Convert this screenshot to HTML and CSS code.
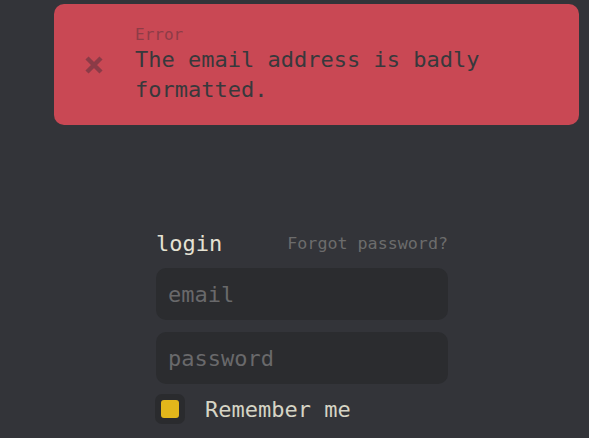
FILE: index.html
```html
<!DOCTYPE html>
<html lang="en">
<head>
    <meta charset="UTF-8">
    <title>Login</title>
    <link rel="stylesheet" href="styles.css">
</head>

<body>
    <div class="toast-bar">
        <div class="toast">
            <svg class="toast-icon" width="18" height="18" viewBox="0 0 18 18">
                <path d="M2 2 L16 16 M16 2 L2 16" stroke="#8b3b47" stroke-width="4.4" fill="none"/>
            </svg>
            <div class="toast-text">
                <div class="toast-title">Error</div>
                <div class="toast-msg">The email address is badly formatted.</div>
            </div>
        </div>
    </div>

    <form class="login-form" onsubmit="return false">
        <div class="form-head">
            <span class="form-title">login</span>
            <a href="#" class="forgot">Forgot password?</a>
        </div>
        <input type="text" class="field" placeholder="email">
        <input type="password" class="field" placeholder="password">
        <label class="remember">
            <span class="check"><span class="check-mark"></span></span>
            Remember me
        </label>
    </form>
</body>
</html>
```

FILE: styles.css
```css
body {
    font-family: 'DejaVu Sans Mono', 'Liberation Mono', monospace;
    background-color: #333439;
    margin: 0;
    padding: 0;
    color: #e5e2d3;
}
.toast-bar {
    display: flex;
    justify-content: flex-end;
    padding: 4px 10px 0 0;
}
.toast {
    width: 525px;
    height: 121px;
    box-sizing: border-box;
    background-color: #c94854;
    border-radius: 10px;
    display: flex;
    align-items: center;
    padding-left: 31px;
}
.toast-icon {
    display: block;
    flex-shrink: 0;
    margin-top: 1px;
}
.toast-text {
    margin-left: 32px;
    margin-top: 1px;
}
.toast-title {
    font-size: 16px;
    line-height: 20px;
    color: #8e3c47;
}
.toast-msg {
    font-size: 22px;
    line-height: 30px;
    color: #37393c;
    width: 360px;
}
.login-form {
    width: 292px;
    margin: 104px 0 0 156px;
    display: flex;
    flex-direction: column;
}
.form-head {
    display: flex;
    justify-content: space-between;
    align-items: center;
    height: 30px;
    margin-bottom: 9px;
}
.form-title {
    font-size: 22px;
    line-height: 30px;
    color: #e5e2d3;
}
.forgot {
    font-size: 16.7px;
    line-height: 20px;
    color: #6c6c6c;
    text-decoration: none;
    margin-top: -3px;
}
.field {
    height: 52px;
    box-sizing: border-box;
    border: none;
    outline: none;
    border-radius: 10px;
    background-color: #2b2c2f;
    padding: 0 12px;
    font-family: inherit;
    font-size: 22px;
    color: #e5e2d3;
    margin-bottom: 12px;
}
.field::placeholder {
    color: #69696b;
}
.remember {
    display: flex;
    align-items: center;
    gap: 20px;
    margin-top: -2px;
    margin-left: -1px;
    font-size: 22px;
    line-height: 30px;
    color: #d6d4c5;
    cursor: pointer;
}
.check {
    width: 30px;
    height: 30px;
    box-sizing: border-box;
    padding: 6px;
    border-radius: 7px;
    background-color: #2a2b2e;
    margin-bottom: 2px;
}
.check-mark {
    display: block;
    width: 18px;
    height: 18px;
    border-radius: 3px;
    background-color: #e2b61b;
}
```
